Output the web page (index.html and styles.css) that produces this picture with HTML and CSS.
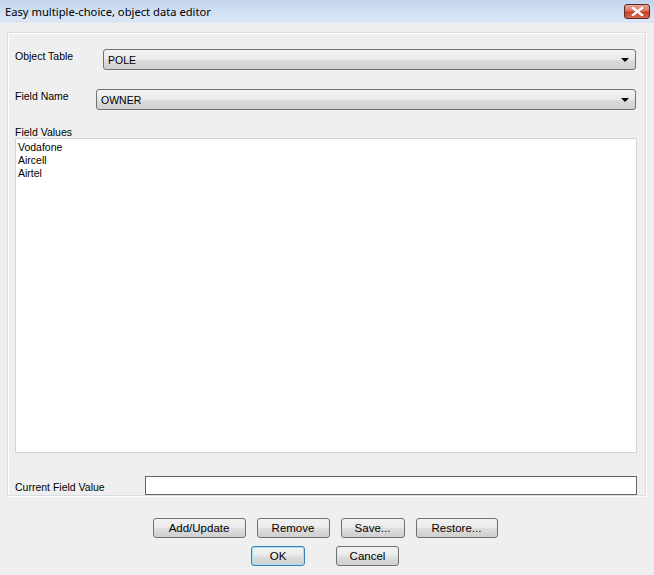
FILE: index.html
```html
<!doctype html>
<html lang="en">
<head>
    <meta charset="UTF-8">
    <title>Easy multiple-choice, object data editor</title>
    <link rel="stylesheet" href="styles.css">
</head>
<body>
    <div class='window'>

        <div class='titlebar'>
            <div class='title'>Easy multiple-choice, object data editor</div>
            <div class='closebtn'>
                <svg width='13' height='9' viewBox='0 0 13 9'>
                    <path d='M2 1 L11 8 M11 1 L2 8' stroke='#fff' stroke-width='2.4' stroke-linecap='square'/>
                </svg>
            </div>
        </div>

        <div class='panel'>

            <div class='row rowTable'>
                <div class='label'>Object Table</div>
                <div class='combo comboTable'>
                    <span>POLE</span>
                    <span class='arrow'></span>
                </div>
            </div>

            <div class='row rowField'>
                <div class='label'>Field Name</div>
                <div class='combo comboField'>
                    <span>OWNER</span>
                    <span class='arrow'></span>
                </div>
            </div>

            <div class='label valuesLabel'>Field Values</div>
            <div class='listbox'>
                <div class='item'>Vodafone</div>
                <div class='item'>Aircell</div>
                <div class='item'>Airtel</div>
            </div>

            <div class='row rowCurrent'>
                <div class='label'>Current Field Value</div>
                <input class='textbox' value=''/>
            </div>

        </div>

        <div class='buttons'>
            <div class='btnrow'>
                <div class='button btnAdd'>Add/Update</div>
                <div class='button btnRemove'>Remove</div>
                <div class='button btnSave'>Save...</div>
                <div class='button btnRestore'>Restore...</div>
            </div>
            <div class='btnrow'>
                <div class='button btnOk defaultbutton'>OK</div>
                <div class='button btnCancel'>Cancel</div>
            </div>
        </div>

    </div>
</body>
</html>
```

FILE: styles.css
```css
html, body
{
    margin:           0;
    padding:          0;
}

body
{
    width:            654px;
    height:           575px;
    background-color: #efefef;
    font-family:      "Liberation Sans", Arial, sans-serif;
    font-size:        10.5px;
    color:            #000;
    overflow:         hidden;
}

.window
{
    display:          flex;
    flex-direction:   column;
    height:           575px;
}

.titlebar
{
    height:           22px;
    display:          flex;
    align-items:      center;
    justify-content:  space-between;
    padding:          0 4px 0 5px;
    background:       linear-gradient(#c2d5ee, #d3e1f3 60%, #dbe6f5);
    border-bottom:    1px solid #dfe7f2;
}

.title
{
    font-family:      "Noto Sans", "DejaVu Sans", sans-serif;
    font-size:        11.2px;
    color:            #000;
    padding-top:      1px;
}

.closebtn
{
    width:            24px;
    height:           13px;
    margin-top:       1px;
    display:          flex;
    align-items:      center;
    justify-content:  center;
    border:           1px solid #5c2a2a;
    border-radius:    3px;
    background:       linear-gradient(#e8a89c, #d9705c 45%, #c7402a 55%, #d8684f);
}

.panel
{
    margin:           9px 8px 0 7px;
    height:           464px;
    padding:          16px 8px 0 7px;
    border:           1px solid #d6dee8;
    box-shadow:       inset 1px 1px 0 #fff, 1px 1px 0 #fff;
    display:          flex;
    flex-direction:   column;
    box-sizing:       border-box;
}

.row
{
    display:          flex;
    align-items:      center;
}

.label
{
    white-space:      nowrap;
}

.rowTable .label
{
    width:            88px;
    margin-top:       -8px;
}

.rowField
{
    margin-top:       19px;
}

.rowField .label
{
    width:            81px;
    margin-top:       -7px;
}

.combo
{
    flex:             1;
    height:           21px;
    box-sizing:       border-box;
    display:          flex;
    align-items:      center;
    justify-content:  space-between;
    padding:          1px 6px 0 4px;
    margin-right:     1px;
    border:           1px solid #707070;
    border-radius:    3px;
    background:       linear-gradient(#f3f3f3, #ebebeb 45%, #dddddd 55%, #cfcfcf);
}

.arrow
{
    width:            0;
    height:           0;
    border-left:      4px solid transparent;
    border-right:     4px solid transparent;
    border-top:       4px solid #000;
}

.valuesLabel
{
    margin-top:       16px;
    height:           12px;
    line-height:      12px;
}

.listbox
{
    height:           315px;
    box-sizing:       border-box;
    background-color: #fff;
    border:           1px solid #cfd4d9;
    padding:          2px 2px;
}

.item
{
    height:           13px;
    line-height:      13px;
}

.rowCurrent
{
    margin-top:       23px;
}

.rowCurrent .label
{
    width:            130px;
    margin-top:       2px;
}

.textbox
{
    flex:             1;
    height:           19px;
    box-sizing:       border-box;
    margin:           0;
    border:           1px solid #646464;
    background-color: #fff;
    font-family:      "Liberation Sans", Arial, sans-serif;
    font-size:        11px;
}

.buttons
{
    display:          flex;
    flex-direction:   column;
    align-items:      center;
    gap:              8px;
    margin-top:       22px;
    padding-right:    4px;
}

.btnrow
{
    display:          flex;
    gap:              11px;
}

.button
{
    height:           20px;
    box-sizing:       border-box;
    display:          flex;
    align-items:      center;
    justify-content:  center;
    font-size:        11.5px;
    border:           1px solid #707070;
    border-radius:    3px;
    background:       linear-gradient(#f2f2f2, #ebebeb 45%, #dddddd 55%, #cfcfcf);
}

.btnAdd      { width: 93px; }
.btnRemove   { width: 73px; }
.btnSave     { width: 64px; }
.btnRestore  { width: 82px; }
.btnOk       { width: 54px; }
.btnCancel   { width: 63px; }

.btnrow .btnCancel
{
    margin-left:      20px;
}

.defaultbutton
{
    border-color:     #3c7fb1;
    box-shadow:       inset 0 0 0 1px #a6e0f7;
}
```
